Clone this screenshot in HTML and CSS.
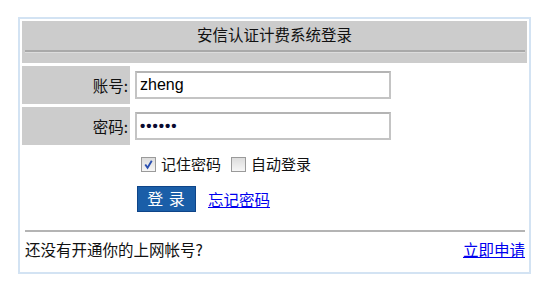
FILE: index.html
```html
<!DOCTYPE html>
<html lang="zh-CN">
<head>
<meta charset="utf-8">
<title>安信认证计费系统登录</title>
<link rel="stylesheet" href="styles.css">
</head>
<body>
<div class="panel">
  <div class="header">
    <div class="title">安信认证计费系统登录</div>
    <div class="rule"></div>
  </div>
  <div class="row">
    <div class="label">账号:</div>
    <div class="field"><div class="input">zheng</div></div>
  </div>
  <div class="row">
    <div class="label">密码:</div>
    <div class="field"><div class="input pwd">••••••</div></div>
  </div>
  <div class="checks">
    <span class="box checked"><svg viewBox="0 0 14 14" width="14" height="14"><path d="M3.5 6.5 L6 10 L10.5 2.5" fill="none" stroke="#2a4fb0" stroke-width="2"/></svg></span>
    <span class="ctext">记住密码</span>
    <span class="box second"></span>
    <span class="ctext">自动登录</span>
  </div>
  <div class="actions">
    <span class="btn">登 录</span>
    <a class="link" href="#">忘记密码</a>
  </div>
  <div class="rule bottom-rule"></div>
  <div class="footer">
    <span>还没有开通你的上网帐号?</span>
    <a class="link" href="#">立即申请</a>
  </div>
</div>
</body>
</html>
```
FILE: styles.css
```css
html, body {
  margin: 0;
  padding: 0;
  background: #ffffff;
}
body {
  font-family: "Noto Sans CJK SC", "Liberation Sans", sans-serif;
  font-size: 15px;
  color: #111;
}
.panel {
  box-sizing: border-box;
  margin: 17px 0 0 18px;
  width: 513px;
  height: 257px;
  border: 2px solid #d3e3f3;
  padding: 2px;
  display: flex;
  flex-direction: column;
}
.header {
  background: #cccccc;
  height: 42px;
  display: flex;
  flex-direction: column;
}
.title {
  height: 26px;
  line-height: 26px;
  text-align: center;
  font-size: 15.5px;
}
.rule {
  height: 0;
  border-top: 2px solid #a9a9a9;
  border-bottom: 1px solid #dcdcdc;
  margin: 3px 2px 0 3px;
}
.row {
  display: flex;
  margin-top: 3px;
  height: 38px;
}
.label {
  width: 108px;
  background: #cccccc;
  text-align: right;
  line-height: 38px;
  padding-right: 2px;
  box-sizing: border-box;
  font-size: 15.5px;
}
.field {
  padding: 5px 0 0 5px;
}
.input {
  box-sizing: border-box;
  width: 256px;
  height: 28px;
  border: 2px solid #c4c4c4;
  border-top-color: #b4b4b4;
  font-family: "Liberation Sans", sans-serif;
  font-size: 16px;
  line-height: 23px;
  padding-left: 3px;
  color: #000;
}
.pwd {
  font-size: 15px;
  letter-spacing: 1px;
  font-weight: bold;
  padding-left: 3px;
  color: #0a0a30;
}
.checks {
  display: flex;
  align-items: center;
  margin-top: 9px;
  height: 20px;
  padding-left: 119px;
}
.box {
  box-sizing: border-box;
  width: 15px;
  height: 15px;
  border: 1px solid #9a9a9a;
  background: linear-gradient(#dcdcdc, #f6f6f6);
  display: inline-flex;
  margin-right: 5px;
}
.box svg { display: block; }
.box.second { margin-left: 10px; }
.ctext { line-height: 20px; }
.actions {
  display: flex;
  align-items: center;
  margin-top: 12px;
  padding-left: 115px;
  height: 26px;
}
.btn {
  box-sizing: border-box;
  width: 59px;
  height: 26px;
  background: #1a5ea8;
  border: 1px solid #0e4488;
  color: #fff;
  text-align: center;
  line-height: 23px;
  font-size: 16px;
  letter-spacing: 1px;
  margin-right: 12px;
}
.link {
  color: #0000ee;
  text-decoration: underline;
  font-size: 15.5px;
}
.bottom-rule {
  margin: 18px 2px 0 3px;
  border-top: 2px solid #b4b4b4;
  border-bottom: none;
}
.footer {
  display: flex;
  justify-content: space-between;
  align-items: center;
  height: 30px;
  padding: 2px 2px 0 3px;
  font-size: 15.5px;
}
```
